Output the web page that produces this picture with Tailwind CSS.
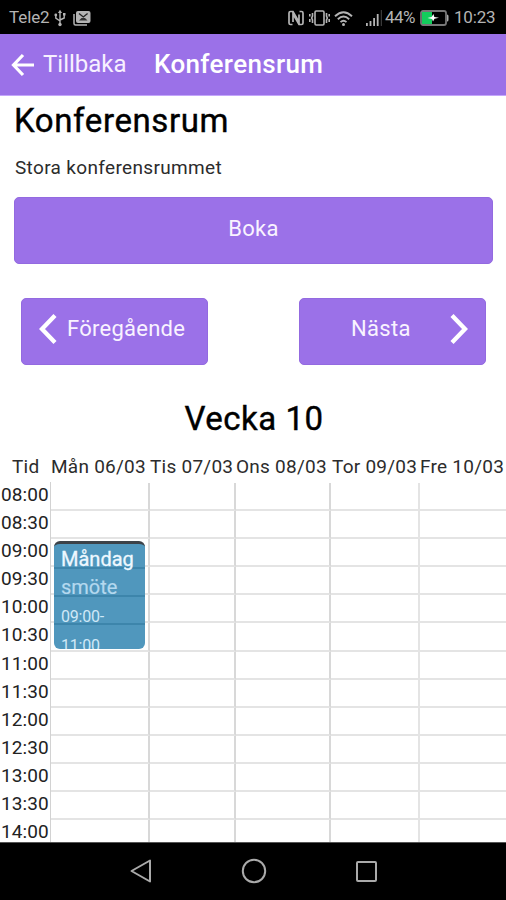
<!DOCTYPE html>
<html lang="sv">
<head>
<meta charset="utf-8">
<title>Konferensrum</title>
<script src="https://cdn.jsdelivr.net/npm/@tailwindcss/browser@4"></script>
</head>
<body class="w-[506px] h-[900px] overflow-hidden bg-white text-black font-['Roboto',sans-serif] flex flex-col whitespace-nowrap">
<div class="h-[34px] shrink-0 bg-black text-[#b4b4b4] flex items-center pl-[9px] pr-[11px] pt-[2px] text-[17px]">
  <span class="tracking-[-0.1px]">Tele2</span>
  <svg class="ml-[4px] w-[12px] h-[18px]" viewBox="0 0 12 18" fill="none" stroke="currentColor" stroke-width="1.4"><path d="M6 3v12M1.8 6v3.2L6 12M10.2 5v4L6 11"/><path d="M3.9 4L6 .8 8.100 4z" fill="currentColor" stroke="none"/><circle cx="6" cy="15.500" r="1.700" fill="currentColor" stroke="none"/><circle cx="1.800" cy="6" r="1.400" fill="currentColor" stroke="none"/><path d="M9 4h2.500v2.500H9z" fill="currentColor" stroke="none"/></svg>
  <svg class="ml-[7px] w-[18px] h-[16px]" viewBox="0 0 18 16"><path d="M1 4v9.500q0 1.500 1.500 1.500H14" fill="none" stroke="#b4b4b4" stroke-width="1.500"/><rect x="3" y="1" width="14.500" height="12" rx="2" fill="#b4b4b4"/><path d="M6 3.500l4.300 3.500 4.300-3.500" fill="none" stroke="#222" stroke-width="1.300"/><path d="M6 10.500l2.500-2.500h3.500l2.500 2.500z" fill="#333"/></svg>
  <div class="ml-auto flex items-center">
    <svg class="w-[16px] h-[18px]" viewBox="0 0 16 18" fill="none" stroke="currentColor"><path d="M4.500 15.500H2.500Q1 15.500 1 14V4q0-1.500 1.500-1.500H5L11 13V5.500" stroke-width="1.700"/><path d="M11.500 2.500h2Q15 2.500 15 4v10q0 1.500-1.500 1.500H11L5 5v8" stroke-width="1.700"/></svg>
    <svg class="ml-[5px] w-[21px] h-[18px]" viewBox="0 0 21 18" fill="none" stroke="currentColor" stroke-width="1.600"><rect x="6" y="2" width="9" height="14" rx="1.200"/><path d="M3.500 4v3l-.8 2 .8 2v3M.8 5v2.500M.8 10v3M17.500 4v3l.8 2-.8 2v3M20.200 5v2.500M20.200 10v3"/></svg>
    <svg class="ml-[4px] w-[19px] h-[17px]" viewBox="0 0 19 17" fill="none" stroke="currentColor" stroke-width="1.900"><path d="M1 6.200q8.500-8 17 0M3.800 9.200q5.700-5.200 11.400 0M6.500 12.100q3-2.700 6 0"/><circle cx="9.500" cy="14.500" r="1.500" fill="currentColor" stroke="none"/></svg>
    <svg class="ml-[13px] w-[16px] h-[18px]" viewBox="0 0 16 18" fill="currentColor"><path d="M0 14h1.800v3H0zM3.600 12h1.800v5H3.600zM7.200 9H9v8H7.200zM10.800 5h1.800v12h-1.800z"/><path d="M14.800 1h1v16h-1z" opacity=".4"/></svg>
    <span class="ml-[3px] w-[31px] text-[17px] tracking-[-0.6px]">44%</span>
    <svg class="ml-[4px] w-[29px] h-[16px]" viewBox="0 0 29 16"><rect x="1" y="1" width="25" height="14" rx="2" fill="none" stroke="#777" stroke-width="1.800"/><path d="M2 2h10v12H2z" fill="#13cc5c"/><path d="M27 4.500q1.500 0 1.500 1.500v4q0 1.500-1.500 1.500z" fill="#aaa"/><path d="M7.500 8l4-.9L13.500 4l.8 3 4.700.8-4.500 1-1.500 2.700-1-2.600z" fill="#fff"/></svg>
    <span class="ml-[5px] w-[41px] text-[17px] tracking-[-0.2px]">10:23</span>
  </div>
</div>
<header class="h-[62px] shrink-0 bg-[#9b71e8] border-b border-[#c4a6fb] text-white flex items-center pl-[11px]">
  <svg class="w-[24px] h-[24px] mt-[1px]" viewBox="0 0 24 24" fill="none" stroke="currentColor" stroke-width="3.200"><path d="M23 12H3M12 2L2.500 12l9.500 10"/></svg>
  <span class="-mt-px ml-[8px] w-[111px] text-[24px] text-[#f7f0ff]">Tillbaka</span>
  <span class="text-[26px] font-medium tracking-[0.35px]">Konferensrum</span>
</header>
<main class="flex-1 min-h-0 overflow-hidden flex flex-col">
  <h1 class="mt-[5px] ml-[14px] h-[40px] leading-[40px] text-[33px] [-webkit-text-stroke:0.4px_black] tracking-[0.6px]">Konferensrum</h1>
  <p class="mt-[15px] ml-[15px] h-[24px] leading-[24px] text-[19px] tracking-[0.34px] text-[#2c2c2c]">Stora konferensrummet</p>
  <button class="mt-[17px] mx-[14px] mr-[13px] h-[67px] shrink-0 rounded-[5px] bg-[#9b71e8] border border-[#936ae0] text-[#f9f3ff] text-[22px] tracking-[0.3px] pb-[5px]">Boka</button>
  <div class="mt-[34px] ml-[21px] mr-[20px] h-[67px] shrink-0 flex justify-between">
    <button class="w-[187px] rounded-[5px] bg-[#9b71e8] border border-[#936ae0] text-[#f9f3ff] text-[22px] tracking-[0.25px] flex items-center pl-[17px] pb-[6px]">
      <svg class="w-[18px] h-[30px]" viewBox="0 0 18 30" fill="none" stroke="#fff" stroke-width="4.300"><path d="M16 1.500L3 15l13 13.500"/></svg>
      <span class="ml-[10px]">Föregående</span>
    </button>
    <button class="w-[187px] rounded-[5px] bg-[#9b71e8] border border-[#936ae0] text-[#f9f3ff] text-[22px] tracking-[0.3px] flex items-center pl-[51px] pr-[17px] pb-[6px]">
      <span>Nästa</span>
      <svg class="ml-auto w-[18px] h-[30px]" viewBox="0 0 18 30" fill="none" stroke="#fff" stroke-width="4.300"><path d="M2 1.500L15 15 2 28.500"/></svg>
    </button>
  </div>
  <h2 class="mt-[34px] pl-[2px] h-[40px] leading-[40px] text-center text-[33px] [-webkit-text-stroke:0.4px_black] tracking-[0.5px]">Vecka 10</h2>
  <div class="mt-[14px] h-[29px] shrink-0 leading-[28px] grid grid-cols-[51px_98px_87px_95px_89px_86px] text-[19px] tracking-[0.25px] text-[#2c2c2c]">
    <span class="pl-[12px]">Tid</span><span>Mån 06/03</span><span class="pl-px">Tis 07/03</span><span>Ons 08/03</span><span class="pl-px">Tor 09/03</span><span>Fre 10/03</span>
  </div>
  <div id="rows" class="relative">
    <div class="absolute z-10 left-[54px] top-[59px] w-[91px] h-[108px] rounded-[6px] overflow-hidden bg-[#5097bd] border-t-[3px] border-[#3c4248] pl-[7px] bg-[linear-gradient(#3d85ab,#3d85ab),linear-gradient(#3d85ab,#3d85ab),linear-gradient(#3d85ab,#3d85ab)] bg-no-repeat bg-size-[100%_2px] bg-position-[0_23px,0_51px,0_79px]">
      <div class="mt-px h-[28px] leading-[28px] text-[20px] [-webkit-text-stroke:0.3px_#eef8ff] text-[#eef8ff]">Måndag</div>
      <div class="h-[28px] leading-[28px] text-[20px] [-webkit-text-stroke:0.2px_#b5d9ef] text-[#b5d9ef]">smöte</div>
      <div class="h-[29px] leading-[31px] text-[16px] tracking-[-0.2px] text-[#cfe8f7]">09:00-</div>
      <div class="h-[28px] leading-[31px] text-[16px] tracking-[-0.2px] text-[#cfe8f7]">11:00</div>
    </div>
  </div>
</main>
<nav class="h-[58px] shrink-0 bg-black border-t border-[#555] flex items-center justify-center text-[#aaa] pb-px">
  <svg class="ml-[2px] w-[22px] h-[24px]" viewBox="0 0 22 24" fill="none" stroke="currentColor" stroke-width="2" stroke-linejoin="round"><path d="M20 1.500v21L1.500 12z"/></svg>
  <svg class="ml-[89px] w-[26px] h-[26px]" viewBox="0 0 26 26" fill="none" stroke="currentColor" stroke-width="2"><circle cx="13" cy="13" r="11.200"/></svg>
  <svg class="ml-[89px] mr-px w-[21px] h-[21px]" viewBox="0 0 21 21" fill="none" stroke="currentColor" stroke-width="2"><rect x="1" y="1" width="19" height="19" rx="1"/></svg>
</nav>
<script>
const rows = document.getElementById('rows');
for (let m = 480; m <= 840; m += 30) {
  const t = String(Math.floor(m / 60)).padStart(2, '0') + ':' + String(m % 60).padStart(2, '0');
  const r = document.createElement('div');
  r.className = 'h-[28.1px] grid grid-cols-[51px_99px_86px_95px_89px_86px]';
  r.innerHTML = '<span class="border-r border-[#d2d2d2] pl-px text-[19px] tracking-[0.1px] leading-[25px] text-[#222]">' + t + '</span>' +
    '<span class="relative top-px border-r-2 border-b-2 border-r-[#d8d8d8] border-b-[#e4e4e4]"></span>'.repeat(3) +
    '<span class="relative top-px border-r-2 border-b-2 border-[#e4e4e4]"></span>' +
    '<span class="relative top-px border-b-2 border-[#e4e4e4]"></span>';
  rows.appendChild(r);
}
</script>
</body>
</html>
